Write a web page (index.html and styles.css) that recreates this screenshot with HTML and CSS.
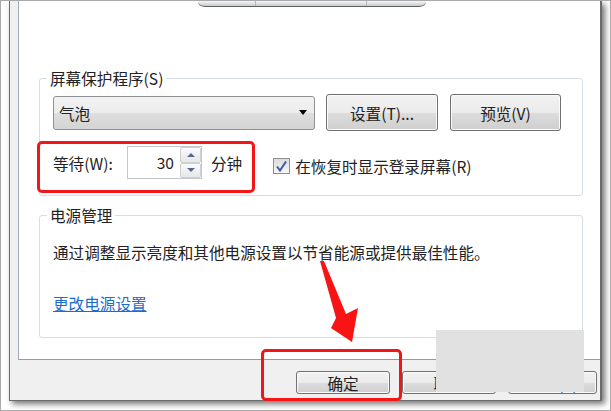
FILE: index.html
```html
<!DOCTYPE html>
<html>
  <head>
    <title>屏幕保护程序设置</title>
    <link rel="stylesheet" href="styles.css">
  </head>
  <body>
    <div class="shot">
      <div class="window">
        <div class="panel">
          <div class="stand"><span></span><span></span><span></span></div>

          <fieldset class="group group-saver">
            <legend>屏幕保护程序(S)</legend>
            <div class="row">
              <div class="combo">
                <span>气泡</span>
                <span class="combo-arrow"></span>
              </div>
              <button class="btn btn-settings">设置(T)...</button>
              <button class="btn btn-preview">预览(V)</button>
            </div>
            <div class="row row-wait">
              <span class="wait-label">等待(W):</span>
              <div class="spin">
                <div class="spin-value">30</div>
                <div class="spin-buttons">
                  <div class="spin-btn"><span class="tri-up"></span></div>
                  <div class="spin-btn"><span class="tri-down"></span></div>
                </div>
              </div>
              <span class="minutes">分钟</span>
              <label class="check">
                <span class="check-box">
                  <svg width="13" height="13" viewBox="0 0 13 13">
                    <path d="M2 6.5 L5 10.5 L11 1.5" fill="none" stroke="#3b5aa8" stroke-width="2"/>
                  </svg>
                </span>
                在恢复时显示登录屏幕(R)
              </label>
            </div>
          </fieldset>

          <fieldset class="group group-power">
            <legend>电源管理</legend>
            <p class="power-text">通过调整显示亮度和其他电源设置以节省能源或提供最佳性能。</p>
            <a class="power-link" href="#">更改电源设置</a>
          </fieldset>
        </div>

        <div class="footer">
          <button class="btn btn-foot">确定</button>
          <button class="btn btn-foot">取消</button>
          <button class="btn btn-foot btn-last">应用(A)</button>
        </div>
      </div>

      <!-- annotations drawn over the screenshot -->
      <div class="patch"></div>
      <div class="mark mark-wait"></div>
      <div class="mark mark-ok"></div>
      <svg class="arrow" width="48" height="88" viewBox="315 258 48 88">
        <polygon points="320,261 324,261 346,314 358,308 352,342 331,328 336,318" fill="#f81414"/>
      </svg>
    </div>
  </body>
</html>
```

FILE: styles.css
```css
* {
  box-sizing: border-box;
}

body {
  margin: 0;
  padding: 0;
  background-color: #fff;
  font-family: "Noto Sans CJK SC", "Noto Sans", sans-serif;
  font-size: 15.6px;
  color: #222;
}

.shot {
  position: relative;
  width: 611px;
  height: 411px;
  overflow: hidden;
  border: 1px solid #a9a9a9;
  background-color: #fff;
}

.window {
  margin-left: 8px;
  width: 593px;
  height: 400px;
  background-color: #f0f0f0;
  border-left: 1px solid #6c6c6c;
  border-right: 2px solid #6c6c6c;
  border-bottom: 1px solid #6c6c6c;
  box-shadow: 3px 3px 6px rgba(0, 0, 0, 0.55);
  overflow: hidden;
}

.panel {
  margin-left: 8px;
  height: 359px;
  background-color: #fff;
  border-left: 1px solid #a3abba;
  border-bottom: 1px solid #9a9a9a;
  overflow: hidden;
}

.stand {
  display: flex;
  margin-left: 179px;
  width: 228px;
  height: 6px;
  border-bottom: 1px solid #5e6066;
  border-radius: 0 0 7px 7px / 0 0 5px 5px;
  background: linear-gradient(#f6f6f6, #c9cbcf);
}

.stand span {
  flex: 1;
  border-left: 1px solid #b4b6ba;
}

.stand span:first-child {
  flex: 0 0 57px;
  border-left: none;
}

.stand span:last-child {
  flex: 0 0 60px;
}

.group {
  margin: 0 0 0 20px;
  width: 544px;
  border: 1px solid #d5dde5;
  border-radius: 3px;
  padding: 7px 13px 16px 13px;
}

.group legend {
  margin-left: -6px;
  padding: 0 3px;
  line-height: 18px;
}

.group-saver {
  margin-top: 62px;
}

.row {
  display: flex;
  align-items: center;
}

.combo {
  display: flex;
  align-items: center;
  justify-content: space-between;
  width: 262px;
  height: 34px;
  padding: 0 6px 0 5px;
  border: 1px solid #8d8f92;
  border-radius: 3px;
  background: linear-gradient(#f3f3f3 0%, #ececec 50%, #dedede 51%, #d4d4d4 100%);
}

.combo-arrow {
  width: 0;
  height: 0;
  border-left: 4px solid transparent;
  border-right: 4px solid transparent;
  border-top: 5px solid #000;
  margin-right: 1px;
}

.btn {
  font-family: inherit;
  font-size: 15.6px;
  color: #222;
  padding: 0;
  border: 1px solid #707070;
  border-radius: 3px;
  background: linear-gradient(#f2f2f2 0%, #ebebeb 50%, #dddddd 51%, #cfcfcf 100%);
  box-shadow: inset 0 0 0 1px #fbfbfb;
}

.btn-settings {
  margin-left: 11px;
  width: 112px;
  height: 37px;
}

.btn-preview {
  margin-left: 12px;
  width: 111px;
  height: 37px;
}

.row-wait {
  margin-top: 15px;
  height: 33px;
}

.wait-label {
  width: 74px;
}

.spin {
  display: flex;
  height: 33px;
}

.spin-value {
  width: 53px;
  height: 33px;
  padding-right: 6px;
  text-align: right;
  line-height: 31px;
  border: 1px solid #c3c6cc;
  border-right: none;
  background-color: #fff;
}

.spin-buttons {
  display: flex;
  flex-direction: column;
  width: 22px;
  border: 1px solid #c3c6cc;
  border-left: none;
}

.spin-btn {
  flex: 1;
  display: flex;
  align-items: center;
  justify-content: center;
  border: 1px solid #cdcfd3;
  border-radius: 2px;
  background: linear-gradient(#fafafa, #e6e7ea);
}

.tri-up,
.tri-down {
  width: 0;
  height: 0;
  border-left: 4px solid transparent;
  border-right: 4px solid transparent;
}

.tri-up {
  border-bottom: 4px solid #55688f;
}

.tri-down {
  border-top: 4px solid #55688f;
}

.minutes {
  margin-left: 9px;
}

.check {
  display: flex;
  align-items: center;
  margin-left: 31px;
  margin-top: 7px;
}

.check-box {
  display: flex;
  align-items: center;
  justify-content: center;
  width: 17px;
  height: 16px;
  margin-right: 5px;
  border: 1px solid #8f8f8f;
  background: linear-gradient(#dcdcdc, #f6f6f6);
}

.group-power {
  margin-top: 10px;
  padding: 18px 13px 23px 13px;
}

.power-text {
  margin: 0;
  line-height: 20px;
}

.power-link {
  display: inline-block;
  margin-top: 31px;
  line-height: 20px;
  color: #1a6ccf;
  text-decoration: underline;
}

.footer {
  display: flex;
  gap: 12px;
  padding: 11px 0 0 286px;
}

.btn-foot {
  flex: 0 0 94px;
  height: 23px;
  line-height: 20px;
}

.btn-foot.btn-last {
  flex-basis: 89px;
}

.patch {
  position: absolute;
  left: 435px;
  top: 329px;
  width: 148px;
  height: 62px;
  background-color: #e1e1e1;
}

.mark {
  position: absolute;
  border: 3px solid #f41616;
  border-radius: 5px;
}

.mark-wait {
  left: 36px;
  top: 140px;
  width: 218px;
  height: 52px;
}

.mark-ok {
  left: 260px;
  top: 348px;
  width: 141px;
  height: 52px;
}

.arrow {
  position: absolute;
  left: 314px;
  top: 257px;
}
```
